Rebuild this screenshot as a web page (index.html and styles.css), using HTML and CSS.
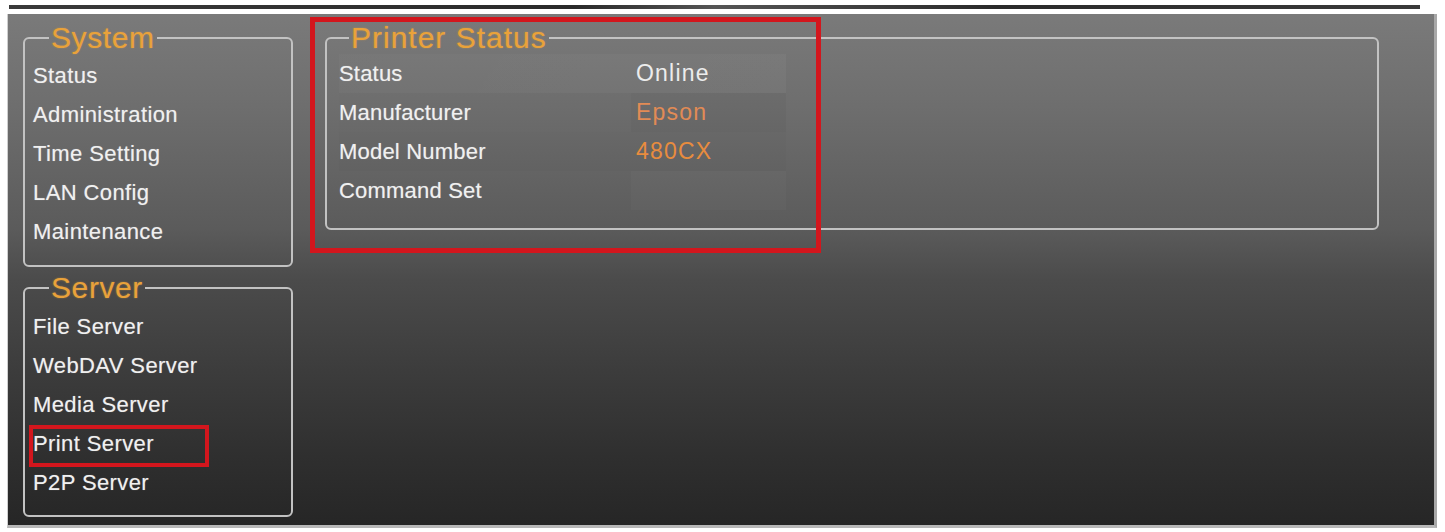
FILE: index.html
```html
<!DOCTYPE html>
<html>
<head>
<meta charset="utf-8">
<link rel="stylesheet" href="styles.css">
</head>
<body>
<div class="topline"></div>
<div class="window">
  <div class="sidebar">
    <fieldset class="group">
      <legend>System</legend>
      <div class="item">Status</div>
      <div class="item">Administration</div>
      <div class="item">Time Setting</div>
      <div class="item">LAN Config</div>
      <div class="item">Maintenance</div>
    </fieldset>
    <fieldset class="group server">
      <legend>Server</legend>
      <div class="item">File Server</div>
      <div class="item">WebDAV Server</div>
      <div class="item">Media Server</div>
      <div class="item selected">Print Server</div>
      <div class="item">P2P Server</div>
    </fieldset>
  </div>
  <fieldset class="group printer">
    <legend>Printer Status</legend>
    <div class="rows">
      <div class="row r1"><span class="label">Status</span><span class="value white">Online</span></div>
      <div class="row r2"><span class="label">Manufacturer</span><span class="value orange">Epson</span></div>
      <div class="row r3"><span class="label">Model Number</span><span class="value orange2">480CX</span></div>
      <div class="row r4"><span class="label">Command Set</span><span class="value"></span></div>
    </div>
  </fieldset>
  <div class="highlight"></div>
</div>
</body>
</html>
```
FILE: styles.css
```css
html, body {
  margin: 0;
  padding: 0;
  background: #ffffff;
}
body {
  font-family: "Liberation Sans", Arial, sans-serif;
}
.topline {
  margin: 5px 25px 0 9px;
  height: 4px;
  background: linear-gradient(90deg, #3a3a3a, #2a2a2a 40%, #555 50%, #2a2a2a 70%, #3a3a3a);
}
.window {
  position: relative;
  box-sizing: border-box;
  margin: 5px 8px 0 7px;
  height: 514px;
  padding: 9px 0 0 15px;
  display: flex;
  gap: 32px;
  align-items: flex-start;
  background: linear-gradient(180deg, #7a7a7a 0%, #6e6e6e 18%, #5b5b5b 42%, #4b4b4b 52%, #3c3c3c 70%, #2e2e2e 88%, #262626 100%);
  border-left: 1px solid #cfcfcf;
  border-right: 3px solid #a8a8a8;
  border-bottom: 3px solid #b8b8b8;
}
.sidebar {
  width: 270px;
  display: flex;
  flex-direction: column;
  gap: 6px;
}
.group {
  margin: 0;
  min-width: 0;
  border: 2px solid #c2c2c2;
  border-radius: 6px;
  padding: 3px 8px 14px 8px;
}
.group legend {
  margin-left: 16px;
  padding: 0 2px;
  font-size: 30px;
  line-height: 30px;
  letter-spacing: 0.6px;
  color: #e9a23a;
  text-shadow: 0 0 2px rgba(233, 162, 58, 0.5);
}
.server {
  padding-top: 4px;
  padding-bottom: 13px;
}
.item {
  position: relative;
  height: 39px;
  line-height: 39px;
  font-size: 22px;
  letter-spacing: 0.4px;
  color: #f0f0f0;
  text-shadow: 0 0 1px rgba(255, 255, 255, 0.4);
}
.item.selected::after {
  content: "";
  position: absolute;
  left: -4px;
  top: 1px;
  width: 180px;
  height: 42px;
  box-sizing: border-box;
  border: 4px solid #d3161d;
}
.printer {
  width: 1054px;
  box-sizing: border-box;
  padding: 1px 12px 18px 12px;
}
.printer legend {
  margin-left: 10px;
  font-size: 30px;
  letter-spacing: 1px;
}
.rows {
  width: 447px;
  display: flex;
  flex-direction: column;
}
.row {
  display: flex;
  height: 39px;
  line-height: 39px;
}
.r1 { background: linear-gradient(90deg, rgba(255,255,255,0.02), rgba(255,255,255,0.035)); }
.r2 { background: linear-gradient(90deg, rgba(0,0,0,0.01) 0, rgba(0,0,0,0.01) 292px, rgba(0,0,0,0.04) 292px); }
.r3 { background: rgba(0,0,0,0.015); }
.r4 { background: linear-gradient(90deg, rgba(255,255,255,0.0) 0, rgba(255,255,255,0.0) 292px, rgba(255,255,255,0.02) 292px); }
.label {
  width: 297px;
  font-size: 22px;
  letter-spacing: 0.2px;
  color: #f0f0f0;
  text-shadow: 0 0 1px rgba(255, 255, 255, 0.4);
}
.value {
  font-size: 23px;
  letter-spacing: 1.2px;
}
.white { color: #ececec; }
.orange { color: #e28b55; }
.orange2 { color: #e88c3e; }
.highlight {
  position: absolute;
  left: 302px;
  top: 3px;
  width: 511px;
  height: 236px;
  box-sizing: border-box;
  border: 5px solid #d3161d;
}
```
